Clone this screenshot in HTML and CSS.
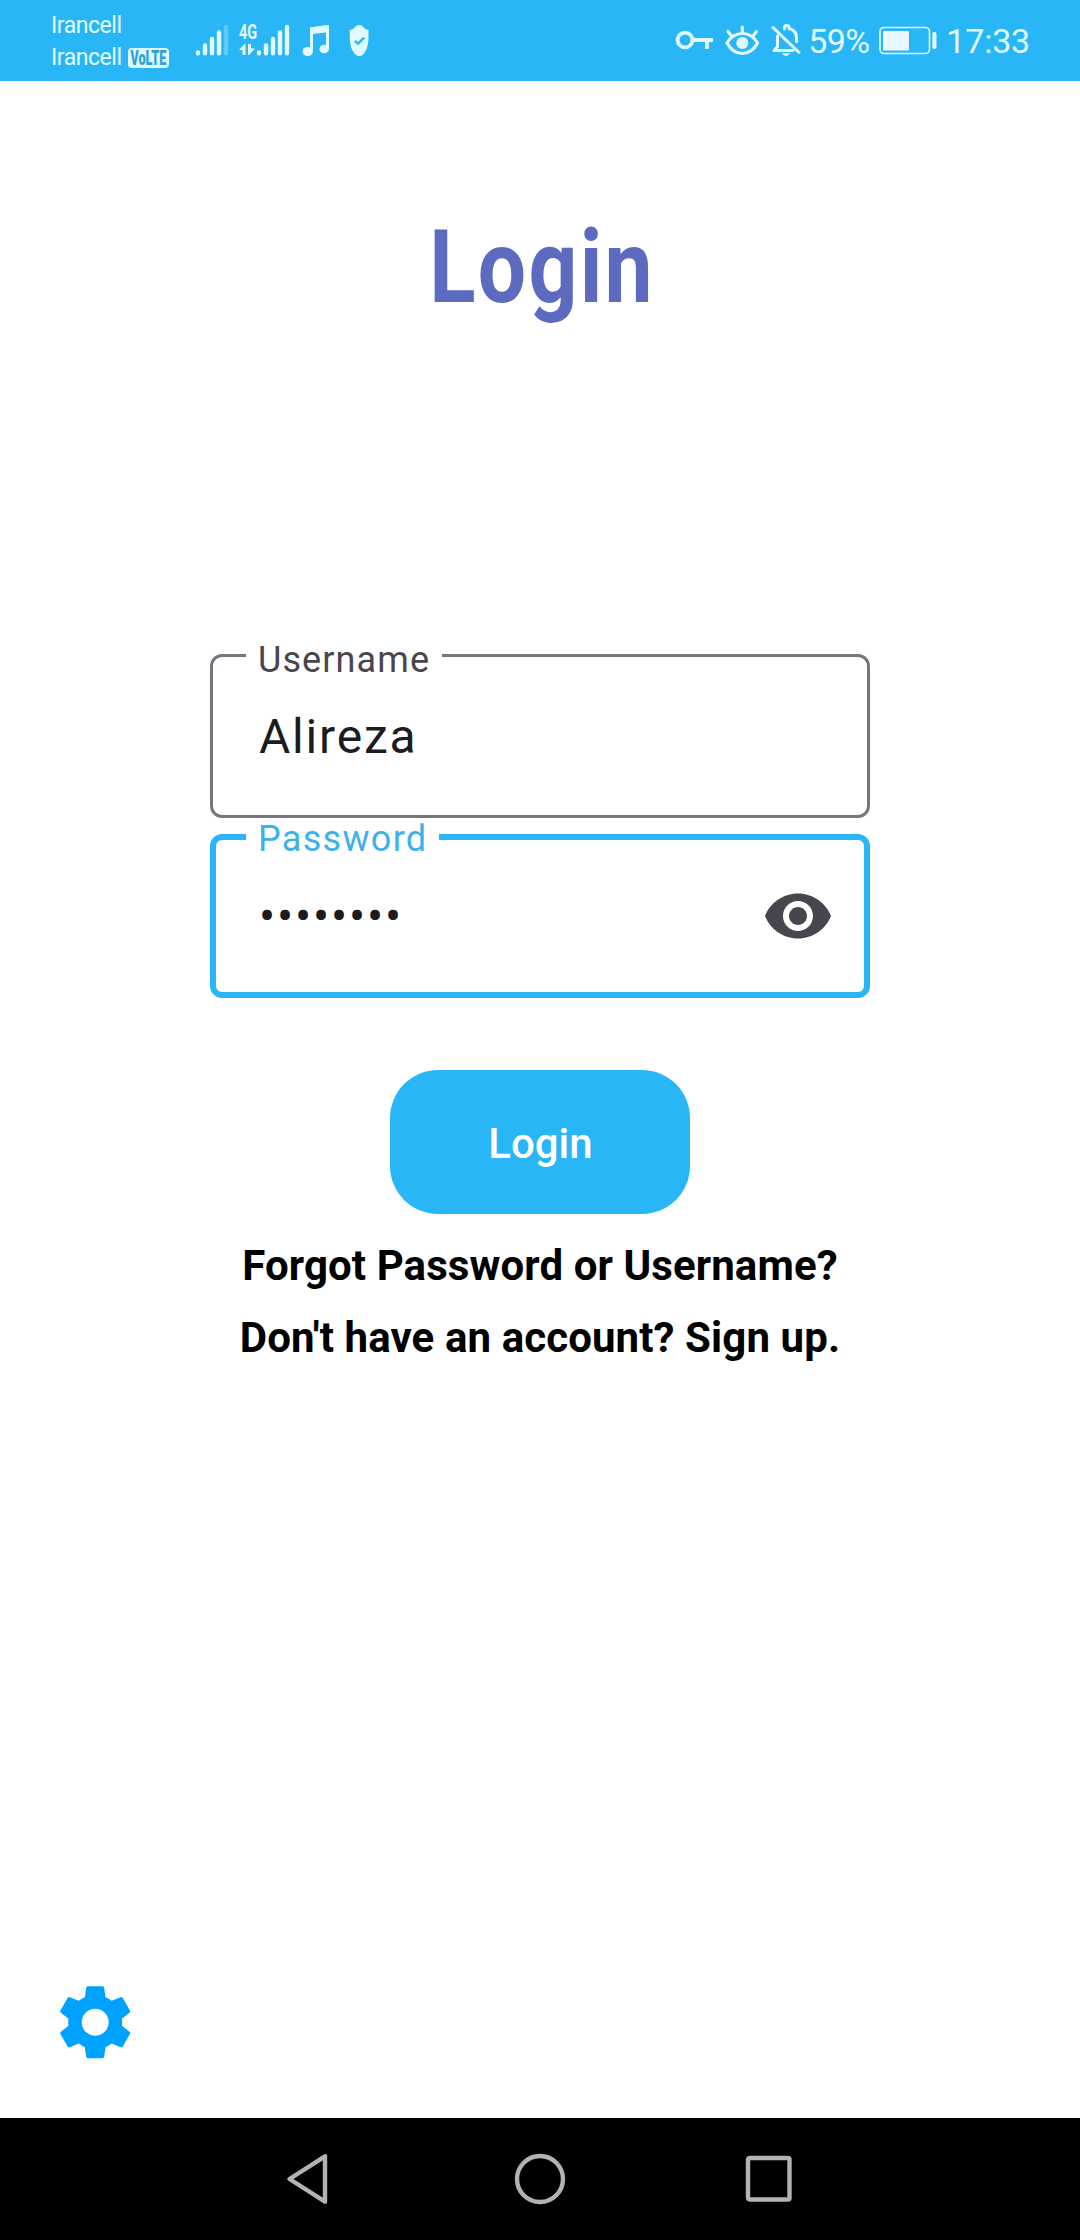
FILE: index.html
```html
<!DOCTYPE html>
<html lang="en">
<head>
<meta charset="utf-8">
<title>Login</title>
<link rel="stylesheet" href="styles.css">
</head>
<body>
<div class="screen">
  <header class="status">
    <div class="carriers">
      <div class="carrier"><span class="carrier-name">Irancell</span></div>
      <div class="carrier"><span class="carrier-name">Irancell</span><span class="volte"><span class="volte-text">VoLTE</span></span></div>
    </div>
    <svg class="icon signal" width="36" height="36" viewBox="0 0 36 36" stroke="currentColor" stroke-width="4.4" stroke-linecap="round">
      <path d="M4 32.500v.8M11 25.500v7.800M18 19v14.300M25 12.500v20.800"/>
      <path d="M32 7v26.300" opacity=".3"/>
    </svg>
    <div class="network">
      <span class="network-type">4G</span>
      <svg width="16" height="12" viewBox="0 0 16 12" fill="currentColor"><path d="M0 6 5.500 0H6.500V11H3.500V6zM9 0h3v4.500H16L10 11H9z"/></svg>
    </div>
    <svg class="icon" width="34" height="36" viewBox="0 0 34 36" stroke="currentColor" stroke-width="4.4" stroke-linecap="round">
      <path d="M3 32.500v.8M10 25.500v7.800M17 19v14.300M24 12.500v20.800M31 7v26.300"/>
    </svg>
    <svg class="icon music" width="28" height="36" viewBox="0 0 28 36">
      <path d="M9.500 30V9L25.500 6.500V28" fill="none" stroke="currentColor" stroke-width="3" stroke-linejoin="round"/>
      <path d="M8 8.500Q8 7.500 9 7.300L25.500 5.300Q27 5.200 27 6.500V12L8 14.500z" fill="currentColor"/>
      <ellipse cx="5.700" cy="31.500" rx="5.200" ry="4.600" fill="currentColor"/>
      <ellipse cx="22.200" cy="29" rx="4.800" ry="4.300" fill="currentColor"/>
    </svg>
    <svg class="icon shield" width="20" height="36" viewBox="0 0 20 36">
      <path d="M10.200 4.900c2 0 2.800.3 4 2.200 1.200 1.700 3 2.500 5.300 2.800V17.400c0 8-2.500 14.500-6 17.500-2 1.300-4.500 1.300-6.500 0C3 31.400 .8 25.400 .8 17.400V9.900C3.500 9.600 5 8.800 6.200 7.100 7.400 5.200 8.200 4.900 10.200 4.900z" fill="currentColor"/>
      <path d="M5.800 20.800 9 23.600l6.200-6" fill="none" stroke="#29b6f6" stroke-width="2.300"/>
    </svg>
    <div class="status-right">
      <svg width="40" height="36" viewBox="0 0 40 36" fill="none" stroke="currentColor" stroke-width="3.800">
        <circle cx="10" cy="20" r="7.400"/><path d="M17.600 20H38M32 20v9"/>
      </svg>
      <svg class="watch" width="34" height="36" viewBox="0 0 34 36" fill="none" stroke="currentColor" stroke-width="3.200" stroke-linecap="round">
        <path d="M2 23C5.500 17 11 13.500 17.300 13.500S29 17 32.500 23C29 29.500 23.600 33.500 17.300 33.500S5.500 29.500 2 23z" stroke-linejoin="round"/>
        <circle cx="17.300" cy="23" r="6" fill="currentColor" stroke="none"/>
        <path d="M17.300 7v5M3 11.500l3.500 4.500M31.500 11.500 28.200 16"/>
      </svg>
      <svg class="muted" width="30" height="36" viewBox="0 0 30 36" fill="none" stroke="currentColor" stroke-width="3" stroke-linecap="round">
        <path d="M2 7.500 28 32.500"/>
        <path d="M6.500 16v10.500L3 30.500h19M25.500 21.500V18c0-5-3-8.500-7.500-9.500V6.500c-1-1.300-3.300-1.300-4.500 0V9" stroke-linejoin="round"/>
        <path d="M12.500 34h5q-2.500 2.500-5 0z" fill="currentColor" stroke-width="1.500"/>
      </svg>
      <span class="percent">59%</span>
      <svg class="battery" width="58" height="36" viewBox="0 0 58 36">
        <rect x="1" y="7.500" width="49.500" height="26" rx="4" fill="none" stroke="currentColor" stroke-width="1.600"/>
        <rect x="4" y="11" width="26" height="19.500" rx="1" fill="#e9f8ff"/>
        <rect x="53.300" y="12" width="4.200" height="17" rx="2" fill="currentColor"/>
      </svg>
      <span class="clock">17:33</span>
    </div>
  </header>

  <main class="content">
    <h1 class="title"><span class="title-text">Login</span></h1>
    <form class="form">
      <div class="field">
        <label class="label">Username</label>
        <span class="value">Alireza</span>
      </div>
      <div class="field focused">
        <label class="label">Password</label>
        <span class="value">••••••••</span>
        <svg class="eye" width="72" height="72" viewBox="0 0 24 24" fill="#49454f"><path d="M12 4.500C7 4.500 2.730 7.610 1 12c1.730 4.390 6 7.500 11 7.500s9.270-3.110 11-7.500c-1.730-4.390-6-7.500-11-7.500zM12 17c-2.760 0-5-2.240-5-5s2.240-5 5-5 5 2.240 5 5-2.240 5-5 5zm0-8c-1.660 0-3 1.340-3 3s1.340 3 3 3 3-1.340 3-3-1.340-3-3-3z"/></svg>
      </div>
      <button class="submit" type="button">Login</button>
    </form>
    <a class="link forgot">Forgot Password or Username?</a>
    <a class="link">Don't have an account? Sign up.</a>
    <svg class="settings" width="86.400" height="86.400" viewBox="0 0 24 24" fill="#00a2ff">
      <path d="M19.430 12.980c.04-.32.07-.64.07-.98s-.03-.66-.07-.98l2.110-1.650c.19-.15.24-.42.12-.64l-2-3.460c-.12-.22-.39-.3-.61-.22l-2.490 1c-.52-.4-1.080-.73-1.690-.98l-.38-2.650C14.460 2.180 14.250 2 14 2h-4c-.25 0-.46.18-.49.42l-.38 2.650c-.61.25-1.170.59-1.690.98l-2.490-1c-.23-.09-.49 0-.61.22l-2 3.460c-.13.22-.07.49.12.64l2.110 1.650c-.04.32-.07.65-.07.98s.03.66.07.98l-2.110 1.650c-.19.15-.24.42-.12.64l2 3.460c.12.22.39.3.61.22l2.490-1c.52.4 1.080.73 1.690.98l.38 2.650c.03.24.24.42.49.42h4c.25 0 .46-.18.49-.42l.38-2.650c.61-.25 1.170-.59 1.690-.98l2.490 1c.23.09.49 0 .61-.22l2-3.460c.12-.22.07-.49-.12-.64l-2.110-1.650z"/>
      <circle cx="12" cy="12" r="3.750" fill="#fff"/>
    </svg>
  </main>

  <nav class="nav">
    <svg width="52" height="52" viewBox="0 0 52 52"><path d="M4.500 26 40 3.300V48.700z"/></svg>
    <svg width="52" height="52" viewBox="0 0 52 52"><circle cx="26" cy="26" r="23"/></svg>
    <svg width="52" height="52" viewBox="0 0 52 52"><rect x="5" y="5" width="41.500" height="41.500" rx="1.500"/></svg>
  </nav>
</div>
</body>
</html>
```
FILE: styles.css
```css
* { box-sizing: border-box; }
body { margin: 0; font-family: Roboto, sans-serif; background: #fff; }
svg { display: block; flex: none; }

.screen { display: flex; flex-direction: column; width: 1080px; height: 2240px; }

.status {
  display: flex;
  align-items: flex-start;
  height: 81px;
  padding: 20px 50px 0 51px;
  background: #29b6f6;
  color: #e0faff;
}
.carriers { width: 143px; margin-top: -10px; }
.carrier { display: flex; align-items: center; height: 32px; font-size: 23px; line-height: 32px; }
.carrier-name { letter-spacing: -0.450px; }
.volte {
  width: 41px;
  height: 20px;
  margin-left: 6px;
  border-radius: 4px;
  background: currentColor;
  text-align: center;
  line-height: 20px;
}
.volte-text {
  display: inline-block;
  margin: 0 -10px;
  color: #29a3dc;
  font-size: 20px;
  font-weight: 900;
  transform: scaleX(0.64);
}
.network { width: 17px; margin: 3px 0 0 9px; }
.network-type {
  display: block;
  width: 26px;
  height: 21px;
  font-size: 20px;
  font-weight: 700;
  line-height: 18px;
  transform: scaleX(0.72);
  transform-origin: 0 0;
}
.music { margin-left: 12px; }
.shield { margin-left: 19px; }

.status-right { display: flex; margin-left: auto; }
.watch { margin-left: 10px; }
.muted { margin-left: 12px; }
.percent, .clock { height: 36px; font-size: 34px; line-height: 42px; white-space: nowrap; }
.percent { width: 62px; margin-left: 7px; letter-spacing: -0.600px; }
.battery { margin-left: 9px; }
.clock { margin-left: 9px; letter-spacing: -0.200px; }

.content { display: flex; flex: 1; flex-direction: column; align-items: center; }
.title { margin: 116px 0 0; font-size: 102px; font-weight: 700; line-height: 140px; color: #5c6bc0; }
.title-text { display: inline-block; padding-left: 4px; letter-spacing: 2.700px; transform: scaleX(0.84); }

.form { display: flex; flex-direction: column; align-items: center; gap: 16px; margin-top: 317px; }
.field {
  position: relative;
  display: flex;
  align-items: center;
  justify-content: space-between;
  width: 660px;
  height: 164px;
  padding: 2px 33px 0 46px;
  border: 3px solid #79747e;
  border-radius: 12px;
}
.focused { padding: 0 30px 0 43px; border: 6px solid #29b6f6; }
.focused .value { padding-top: 2px; }

/* Floating label, cutting a notch in the top border */
.label {
  position: absolute;
  top: -12px;
  left: 33px;
  width: 196px;
  padding-left: 12px;
  background: #fff;
  color: #49454f;
  font-size: 36px;
  line-height: 30px;
  letter-spacing: 1.100px;
}
.focused .label { top: -16px; left: 30px; width: 193px; color: #3db2e8; letter-spacing: 1.300px; }
.value { color: #1c1b1f; font-size: 48px; line-height: 60px; letter-spacing: 1.800px; }

.submit {
  width: 300px;
  height: 144px;
  margin-top: 56px;
  padding: 4px 0 0 1px;
  border: 0;
  border-radius: 48px;
  background: #29b6f6;
  color: #fff;
  font: 500 42px/48px Roboto, sans-serif;
}
.link { font-size: 42px; font-weight: 700; line-height: 72px; letter-spacing: 0.100px; color: #000; white-space: nowrap; }
.forgot { margin-top: 16px; }
.settings { align-self: flex-start; margin: auto 0 53px 52px; }

.nav {
  display: flex;
  justify-content: center;
  gap: 177px;
  height: 122px;
  padding-top: 35px;
  background: #000;
}
.nav svg { fill: none; stroke: #b3b3b3; stroke-width: 4.400; stroke-linejoin: round; }
```
